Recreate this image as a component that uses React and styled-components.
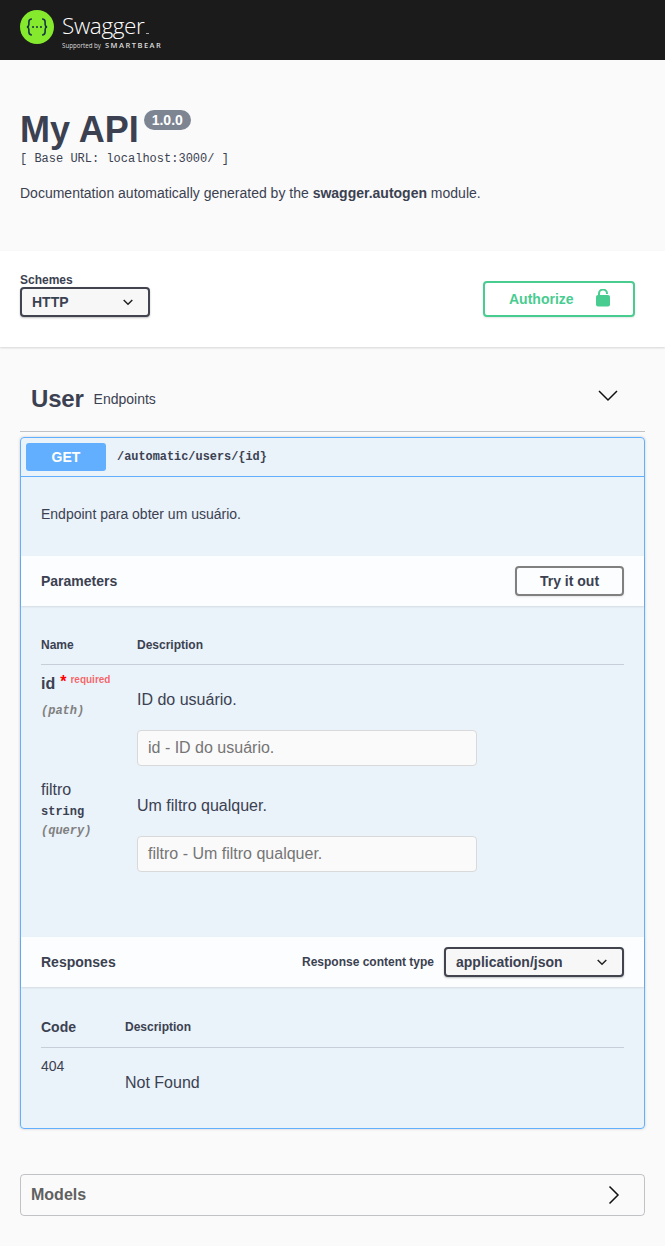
import styled, { createGlobalStyle } from "styled-components";

const GlobalStyle = createGlobalStyle`
  html, body {
    margin: 0;
    padding: 0;
    background: #fafafa;
  }
  * {
    box-sizing: border-box;
  }
  body {
    font-family: "Liberation Sans", Arial, sans-serif;
    color: #3b4151;
  }
`;

const Page = styled.div`
  width: 665px;
  height: 1246px;
  overflow: hidden;
`;

const Topbar = styled.header`
  height: 60px;
  background: #1b1b1b;
  padding: 10px 20px 0;
  display: flex;
  gap: 8px;
`;

const LogoText = styled.div`
  display: flex;
  flex-direction: column;
  color: #fff;
`;

const LogoName = styled.div`
  display: flex;
  align-items: baseline;
  margin-top: 1px;
  font-family: "Open Sans", sans-serif;
  font-weight: 300;
  font-size: 22.5px;
  line-height: 30px;
  height: 30px;
  letter-spacing: -0.35px;
`;

const LogoMark = styled.span`
  width: 3px;
  height: 1px;
  margin-left: 1px;
  background: #aaa;
`;

const LogoSub = styled.div`
  display: flex;
  align-items: baseline;
  gap: 4px;
  font-family: "Open Sans", sans-serif;
  font-size: 6.2px;
  line-height: 9px;
  color: #ddd;
`;

const LogoBrand = styled.span`
  font-size: 7.5px;
  font-weight: 600;
  letter-spacing: 1.5px;
`;

const Info = styled.section`
  height: 191px;
  padding: 50px 20px 0;
`;

const TitleRow = styled.div`
  display: flex;
  align-items: flex-start;
  height: 40px;
`;

const Title = styled.h1`
  margin: 0;
  font-size: 36px;
  line-height: 40px;
  font-weight: 700;
  color: #3b4151;
`;

const Version = styled.span`
  margin: 0 0 0 5px;
  height: 20px;
  padding: 0 8px;
  border-radius: 57px;
  background: #7d8492;
  color: #fff;
  font-size: 14px;
  line-height: 20px;
  font-weight: 700;
`;

const BaseUrl = styled.div`
  margin-top: 2px;
  font-family: "Liberation Mono", monospace;
  font-size: 12px;
  line-height: 15px;
  color: #3b4151;
`;

const Description = styled.p`
  margin: 17px 0 0;
  font-size: 14px;
  line-height: 18px;
  color: #3b4151;
`;

const SchemeBar = styled.section`
  height: 96px;
  background: #fff;
  box-shadow: 0 1px 2px 0 rgba(0, 0, 0, 0.15);
  padding: 23px 30px 0 20px;
  display: flex;
  justify-content: space-between;
  align-items: flex-start;
`;

const SchemeLabel = styled.div`
  font-size: 12px;
  line-height: 13px;
  font-weight: 700;
  color: #3b4151;
`;

const Select = styled.div`
  width: ${(p) => p.$width}px;
  height: 30px;
  border: 2px solid #41444e;
  border-radius: 4px;
  background: #f7f7f7;
  box-shadow: 0 1px 2px 0 rgba(0, 0, 0, 0.25);
  padding: 0 15px 0 10px;
  display: flex;
  align-items: center;
  justify-content: space-between;
  font-size: 14px;
  font-weight: 700;
  color: #3b4151;
`;

const AuthorizeButton = styled.button`
  margin-top: 7px;
  width: 152px;
  height: 36px;
  border: 2px solid #49cc90;
  border-radius: 4px;
  background: transparent;
  box-shadow: 0 1px 2px rgba(0, 0, 0, 0.1);
  padding: 0 23px 0 24px;
  display: flex;
  align-items: center;
  justify-content: space-between;
  font-family: inherit;
  font-size: 14px;
  font-weight: 700;
  color: #49cc90;
`;

const Content = styled.main`
  padding: 0 20px;
`;

const TagHeader = styled.div`
  height: 85px;
  padding: 32px 27px 0 11px;
  border-bottom: 1px solid rgba(59, 65, 81, 0.3);
  display: flex;
  align-items: flex-start;
  justify-content: space-between;
`;

const TagTitle = styled.div`
  display: flex;
  align-items: center;
  gap: 10px;
  height: 40px;
`;

const TagName = styled.span`
  font-size: 24px;
  font-weight: 700;
  letter-spacing: -0.2px;
  color: #3b4151;
`;

const TagNote = styled.span`
  font-size: 14px;
  color: #3b4151;
`;

const OpBlock = styled.section`
  margin-top: 5px;
  height: 692px;
  background: rgba(97, 175, 254, 0.1);
  border: 1px solid #61affe;
  border-radius: 4px;
  box-shadow: 0 0 3px rgba(0, 0, 0, 0.19);
`;

const OpSummary = styled.div`
  height: 39px;
  border-bottom: 1px solid #61affe;
  padding: 5px;
  display: flex;
  align-items: center;
`;

const Method = styled.span`
  width: 80px;
  height: 28px;
  border-radius: 3px;
  background: #61affe;
  color: #fff;
  font-size: 14px;
  font-weight: 700;
  display: flex;
  align-items: center;
  justify-content: center;
`;

const OpPath = styled.span`
  margin-left: 11px;
  font-family: "Liberation Mono", monospace;
  font-size: 11.9px;
  font-weight: 700;
  color: #3b4151;
`;

const OpDescription = styled.div`
  height: 79px;
  padding: 28px 20px 0;
  font-size: 14px;
  line-height: 18px;
  color: #3b4151;
`;

const SectionHeader = styled.div`
  height: 50px;
  padding: 0 20px;
  background: hsla(0, 0%, 100%, 0.8);
  box-shadow: 0 1px 2px rgba(0, 0, 0, 0.1);
  display: flex;
  align-items: center;
  justify-content: space-between;
`;

const SectionTitle = styled.h4`
  margin: 0;
  font-size: 14px;
  font-weight: 700;
  color: #3b4151;
`;

const TryButton = styled.button`
  width: 109px;
  height: 30px;
  border: 2px solid gray;
  border-radius: 4px;
  background: transparent;
  box-shadow: 0 1px 2px rgba(0, 0, 0, 0.1);
  font-family: inherit;
  font-size: 14px;
  font-weight: 700;
  color: #3b4151;
`;

const Params = styled.div`
  height: 331px;
  padding: 20px 20px 0;
`;

const Responses = styled.div`
  padding: 20px 20px 0;
`;

const HeadRow = styled.div`
  display: grid;
  grid-template-columns: ${(p) => p.$nameWidth}px 1fr;
  align-items: center;
  height: ${(p) => p.$height}px;
  border-bottom: 1px solid rgba(59, 65, 81, 0.2);
`;

const HeadCell = styled.span`
  font-size: ${(p) => (p.$large ? 14 : 12)}px;
  font-weight: 700;
  color: #3b4151;
`;

const ParamRow = styled.div`
  display: grid;
  grid-template-columns: 96px 1fr;
  height: ${(p) => p.$height}px;
`;

const ParamCell = styled.div`
  padding-top: ${(p) => p.$top || 0}px;
`;

const ParamName = styled.div`
  display: flex;
  align-items: flex-start;
  font-size: 16px;
  line-height: 20px;
  font-weight: ${(p) => (p.$required ? 700 : 400)};
  color: #3b4151;
`;

const Star = styled.span`
  margin: -2px 0 0 5px;
  font-size: 16px;
  line-height: 20px;
  color: red;
`;

const RequiredNote = styled.span`
  margin: -4px 0 0 4px;
  font-size: 10px;
  line-height: 20px;
  font-weight: 700;
  color: rgba(255, 0, 0, 0.6);
`;

const ParamType = styled.div`
  margin-top: ${(p) => p.$top}px;
  font-family: "Liberation Mono", monospace;
  font-size: 12px;
  line-height: 15px;
  font-weight: 700;
  color: #3b4151;
`;

const ParamIn = styled.div`
  margin-top: ${(p) => p.$top}px;
  font-family: "Liberation Mono", monospace;
  font-size: 12px;
  line-height: 15px;
  font-weight: 700;
  font-style: italic;
  color: gray;
`;

const ParamText = styled.div`
  margin-top: ${(p) => p.$top}px;
  font-size: 16px;
  line-height: 20px;
  color: #3b4151;
`;

const ParamInput = styled.div`
  margin-top: 20px;
  width: 340px;
  height: 36px;
  border: 1px solid #d9d9d9;
  border-radius: 4px;
  background: #fafafa;
  padding: 0 10px;
  display: flex;
  align-items: center;
  font-size: 16px;
  color: #757575;
`;

const ContentTypeGroup = styled.div`
  display: flex;
  align-items: center;
  gap: 10px;
`;

const ContentTypeLabel = styled.span`
  font-size: 12px;
  font-weight: 700;
  color: #3b4151;
`;

const ResponseRow = styled.div`
  display: grid;
  grid-template-columns: 84px 1fr;
  padding-top: 9px;
`;

const ResponseCode = styled.span`
  font-size: 14px;
  line-height: 18px;
  color: #3b4151;
`;

const ResponseText = styled.span`
  margin-top: 16px;
  font-size: 16px;
  line-height: 20px;
  color: #3b4151;
`;

const Models = styled.section`
  margin-top: 45px;
  height: 42px;
  border: 1px solid rgba(59, 65, 81, 0.3);
  border-radius: 4px;
  padding: 0 24px 0 10px;
  display: flex;
  align-items: center;
  justify-content: space-between;
`;

const ModelsTitle = styled.span`
  font-size: 16px;
  font-weight: 700;
  color: #606060;
`;

const LockSvg = styled.svg`
  margin-bottom: 3px;
`;

const ArrowDownSvg = styled.svg`
  margin-top: 11px;
`;

const Logo = () => (
  <svg width="34" height="34" viewBox="0 0 36 36">
    <circle cx="18" cy="18" r="18" fill="#85ea2d" />
    <path
      d="M12.6 9.6c-2.2 0-3.2 1-3.2 3v2.8c0 1.5-.7 2.3-2 2.6 1.3.3 2 1.1 2 2.6v2.8c0 2 1 3 3.2 3M23.4 9.6c2.2 0 3.2 1 3.2 3v2.8c0 1.5.7 2.3 2 2.6-1.3.3-2 1.1-2 2.6v2.8c0 2-1 3-3.2 3"
      fill="none"
      stroke="#173647"
      strokeWidth="1.7"
    />
    <circle cx="13.8" cy="18" r="1.1" fill="#173647" />
    <circle cx="18" cy="18" r="1.1" fill="#173647" />
    <circle cx="22.2" cy="18" r="1.1" fill="#173647" />
  </svg>
);

const SmallChevron = () => (
  <svg width="10" height="7" viewBox="0 0 10 7">
    <path d="M.7 1 5 5.300 9.300 1" fill="none" stroke="#222" strokeWidth="1.5" />
  </svg>
);

const Lock = () => (
  <LockSvg width="14" height="18" viewBox="0 0 14 18">
    <path d="M3 7V4.500a4 4 0 0 1 8 0V5" fill="none" stroke="#49cc90" strokeWidth="2" />
    <rect x="0" y="6" width="14" height="11.500" rx="2" fill="#49cc90" />
  </LockSvg>
);

const ArrowDown = () => (
  <ArrowDownSvg width="20" height="12" viewBox="0 0 20 12">
    <path d="M1 1l9 9 9-9" fill="none" stroke="#111" strokeWidth="1.5" />
  </ArrowDownSvg>
);

const ArrowRight = () => (
  <svg width="12" height="20" viewBox="0 0 12 20">
    <path d="M1.500 1.500l8.500 8.500-8.500 8.500" fill="none" stroke="#111" strokeWidth="1.5" />
  </svg>
);

const App = () => {
  return (
    <Page>
      <GlobalStyle />
      <Topbar>
        <Logo />
        <LogoText>
          <LogoName>
            Swagger
            <LogoMark />
          </LogoName>
          <LogoSub>
            Supported by <LogoBrand>SMARTBEAR</LogoBrand>
          </LogoSub>
        </LogoText>
      </Topbar>

      <Info>
        <TitleRow>
          <Title>My API</Title>
          <Version>1.0.0</Version>
        </TitleRow>
        <BaseUrl>[ Base URL: localhost:3000/ ]</BaseUrl>
        <Description>
          Documentation automatically generated by the <b>swagger.autogen</b> module.
        </Description>
      </Info>

      <SchemeBar>
        <div>
          <SchemeLabel>Schemes</SchemeLabel>
          <Select $width={130}>
            HTTP
            <SmallChevron />
          </Select>
        </div>
        <AuthorizeButton>
          Authorize
          <Lock />
        </AuthorizeButton>
      </SchemeBar>

      <Content>
        <TagHeader>
          <TagTitle>
            <TagName>User</TagName>
            <TagNote>Endpoints</TagNote>
          </TagTitle>
          <ArrowDown />
        </TagHeader>

        <OpBlock>
          <OpSummary>
            <Method>GET</Method>
            <OpPath>/automatic/users/{"{id}"}</OpPath>
          </OpSummary>
          <OpDescription>Endpoint para obter um usuário.</OpDescription>

          <SectionHeader>
            <SectionTitle>Parameters</SectionTitle>
            <TryButton>Try it out</TryButton>
          </SectionHeader>
          <Params>
            <HeadRow $nameWidth={96} $height={39}>
              <HeadCell>Name</HeadCell>
              <HeadCell>Description</HeadCell>
            </HeadRow>
            <ParamRow $height={115}>
              <ParamCell $top={9}>
                <ParamName $required>
                  id<Star>*</Star>
                  <RequiredNote>required</RequiredNote>
                </ParamName>
                <ParamIn $top={10}>(path)</ParamIn>
              </ParamCell>
              <ParamCell>
                <ParamText $top={25}>ID do usuário.</ParamText>
                <ParamInput>id - ID do usuário.</ParamInput>
              </ParamCell>
            </ParamRow>
            <ParamRow $height={110}>
              <ParamCell>
                <ParamName>filtro</ParamName>
                <ParamType $top={5}>string</ParamType>
                <ParamIn $top={4}>(query)</ParamIn>
              </ParamCell>
              <ParamCell>
                <ParamText $top={16}>Um filtro qualquer.</ParamText>
                <ParamInput>filtro - Um filtro qualquer.</ParamInput>
              </ParamCell>
            </ParamRow>
          </Params>

          <SectionHeader>
            <SectionTitle>Responses</SectionTitle>
            <ContentTypeGroup>
              <ContentTypeLabel>Response content type</ContentTypeLabel>
              <Select $width={180}>
                application/json
                <SmallChevron />
              </Select>
            </ContentTypeGroup>
          </SectionHeader>
          <Responses>
            <HeadRow $nameWidth={84} $height={41}>
              <HeadCell $large>Code</HeadCell>
              <HeadCell>Description</HeadCell>
            </HeadRow>
            <ResponseRow>
              <ResponseCode>404</ResponseCode>
              <ResponseText>Not Found</ResponseText>
            </ResponseRow>
          </Responses>
        </OpBlock>

        <Models>
          <ModelsTitle>Models</ModelsTitle>
          <ArrowRight />
        </Models>
      </Content>
    </Page>
  );
};

export default App;
